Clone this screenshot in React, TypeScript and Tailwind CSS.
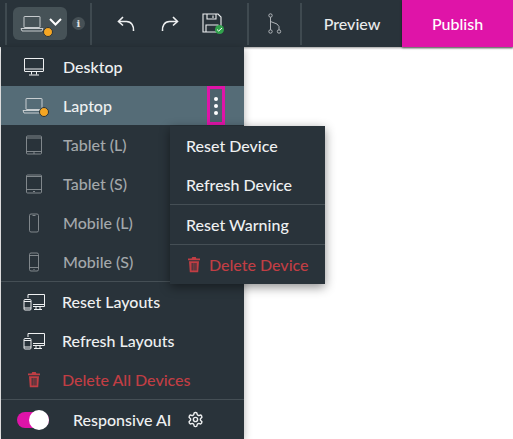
import React from "react";

const P = { fill: "none", stroke: "currentColor", strokeWidth: 1 } as const;

const Desktop = () => (
  <svg width="22" height="20" viewBox="0 0 22 20" {...P}>
    <rect x="1.5" y="1.5" width="19" height="13" rx="0.5" />
    <path d="M1.5 12h19M8.5 14.5v3M13.500 14.5v3M6 18h10" />
  </svg>
);
const Laptop = () => (
  <svg width="24" height="18" viewBox="0 0 24 18" {...P} strokeWidth="0.9">
    <rect x="4" y="1.5" width="16" height="11" rx="0.5" />
    <path d="M1 13.5h22l-1 2.5H2z" />
  </svg>
);
const Tablet = ({ h }: { h: number }) => (
  <svg width="18" height="20" viewBox="0 0 18 20" {...P} strokeWidth="0.9" className="opacity-80">
    <rect x="1.5" y="1" width="15" height="18" rx="1" />
    <path d={h === 20 ? "M1.5 3h15M1.5 16.5h15M8 18h2" : "M1.5 2.5h15M1.5 15.5h15M8 17.5h2"} />
  </svg>
);
const Phone = ({ small }: { small?: boolean }) => (
  <svg width="12" height="20" viewBox="0 0 12 20" {...P} strokeWidth="0.9" className="opacity-80">
    <rect x="1.5" y="1" width="9" height="18" rx="1.5" />
    <path d={small ? "M1.5 3.5h9M1.5 15.5h9M5.500 17.5h1" : "M4.5 2.5h3"} />
  </svg>
);
const Devices = () => (
  <svg width="23" height="18" viewBox="0 0 23 18" {...P}>
    <path d="M5 5V1.5h16.500v12H10" />
    <path d="M10 11.500h11.500M13 13.500v2.500M17 13.500v2.500M11 16.500h8" />
    <rect x="1" y="6.500" width="7" height="10.500" rx="1" />
    <path d="M1 8.500h7M1 15h7" />
  </svg>
);
const Trash = () => (
  <svg width="14" height="17" viewBox="0 0 14 16" fill="currentColor" preserveAspectRatio="none">
    <path d="M1 2.400h3.600L5.300 1h3.400l.7 1.400H13v1.500H1z" />
    <path fillRule="evenodd" d="M2 5h10l-.8 10.200H2.800zM4.600 6.600v7h1.100v-7zm1.900 0v7h1.100v-7zm1.900 0v7h1.100v-7z" />
  </svg>
);
const Badge = ({ cls }: { cls: string }) => (
  <span className={`absolute w-[10px] h-[10px] rounded-full bg-[#f5a623] border border-[#2a343b] ${cls}`} />
);

const Sep = ({ cls }: { cls: string }) => <div className={`w-[2px] h-[42px] bg-[#3f4a50] shrink-0 ${cls}`} />;

function Row({
  icon,
  label,
  cls = "text-[#eef0f1]",
  indent = "pl-[62px]",
  h = "h-[39px]",
}: {
  icon: React.ReactNode;
  label: string;
  cls?: string;
  indent?: string;
  h?: string;
}) {
  return (
    <div className={`relative ${h} flex items-center ${cls}`}>
      <div className="absolute left-[20px] w-[26px] flex justify-center">{icon}</div>
      <span className={indent}>{label}</span>
    </div>
  );
}

const Divider = ({ cls = "" }: { cls?: string }) => <div className={`h-px bg-[#454f55] ${cls}`} />;

export default function App() {
  return (
    <div
      className="relative w-[513px] h-[439px] bg-white overflow-hidden text-[16px] font-medium"
      style={{ fontFamily: "Lato, sans-serif" }}
    >
      {/* toolbar */}
      <div className="h-[47px] bg-[#29333a] flex items-center text-[#eef0f1] shadow-[0_1px_2px_rgba(0,0,0,0.4)]">
        <Sep cls="ml-[5px]" />
        <div className="relative ml-[6px] w-[54px] h-[33px] rounded-[6px] bg-[#465257] flex items-center">
          <div className="ml-[7px] flex text-[#d5d8da]">
            <Laptop />
          </div>
          <Badge cls="left-[30px] top-[20px]" />
          <svg width="13" height="8" viewBox="0 0 13 8" fill="none" stroke="#fff" strokeWidth="2" className="ml-[5px] -mt-[3px]">
            <path d="M1 1l5.500 5.500L12 1" />
          </svg>
        </div>
        <div className="ml-[5px] w-[13px] h-[13px] rounded-full bg-[#465055] text-[#dfe2e3] text-[10px] leading-[13px] font-bold text-center" style={{ fontFamily: "'DejaVu Serif', serif" }}>
          i
        </div>
        <Sep cls="ml-[5px]" />
        <svg width="20" height="20" viewBox="0 0 20 20" fill="none" stroke="#eef0f1" strokeWidth="1.600" className="ml-[24px]">
          <path d="M17.500 17c.5-5-2-9.500-7-9.500H3" />
          <path d="M7 3L2.500 7.500 7 11.500" />
        </svg>
        <svg width="20" height="20" viewBox="0 0 20 20" fill="none" stroke="#eef0f1" strokeWidth="1.600" className="ml-[24px]">
          <path d="M2.500 17c-.5-5 2-9.500 7-9.500H17" />
          <path d="M13 3l4.500 4.500-4.500 4" />
        </svg>
        <div className="relative ml-[22px] w-[24px] h-[24px]">
          <svg width="20" height="20" viewBox="0 0 20 20" fill="none" stroke="#eef0f1" strokeWidth="1.100" className="mt-[1px]">
            <path d="M1 1h15l3 3v15H1z" />
            <path d="M5 1v5h9V1M11 2.500v2.500M4 19v-7h12v7" />
          </svg>
          <span className="absolute left-[13px] top-[13px] w-[9px] h-[9px] rounded-full bg-[#31a24c] flex items-center justify-center">
            <svg width="7" height="5" viewBox="0 0 7 5" fill="none" stroke="#fff" strokeWidth="1">
              <path d="M1 2.500l1.700 1.500L6 1" />
            </svg>
          </span>
        </div>
        <Sep cls="ml-[21px]" />
        <svg width="16" height="24" viewBox="0 0 16 24" fill="none" stroke="#bcc1c4" strokeWidth="0.900" className="ml-[18px]">
          <circle cx="3.500" cy="3.500" r="1.700" />
          <circle cx="3.500" cy="19.500" r="1.700" />
          <circle cx="12" cy="19.500" r="1.700" />
          <path d="M3.500 5.200v12.600M3.500 9.500l6.500 2.500 2 2.500v3.300" />
        </svg>
        <Sep cls="ml-[17px]" />
        <div className="w-[100px] text-center text-[#e9ebec]">Preview</div>
        <div className="w-[111px] h-[47px] bg-[#df14a8] text-white text-center leading-[47px] shadow-[0_1px_2px_rgba(0,0,0,0.5)]">
          Publish
        </div>
      </div>

      {/* device menu */}
      <div className="absolute left-[1px] top-[47px] w-[243px] h-[392px] bg-[#29333a] flex flex-col shadow-[0_2px_8px_rgba(0,0,0,0.3)]">
        <Row icon={<Desktop />} label="Desktop" h="h-[39px]" />
        <div className="relative bg-[#556c77]">
          <Row
            icon={
              <span className="relative flex text-[#d5d8da]">
                <Laptop />
                <Badge cls="left-[17px] top-[10px]" />
              </span>
            }
            label="Laptop"
          />
          <div className="absolute left-[206px] top-0 w-[18px] h-[39px] border-[3px] border-[#df14a8] bg-[#4d626c] flex flex-col items-center justify-center gap-[3px]">
            <span className="w-[4px] h-[4px] rounded-full bg-white" />
            <span className="w-[4px] h-[4px] rounded-full bg-white" />
            <span className="w-[4px] h-[4px] rounded-full bg-white" />
          </div>
        </div>
        <Row icon={<Tablet h={20} />} label="Tablet (L)" cls="text-[#a3a8ab]" />
        <Row icon={<Tablet h={18} />} label="Tablet (S)" cls="text-[#a3a8ab]" />
        <Row icon={<Phone />} label="Mobile (L)" cls="text-[#a3a8ab]" />
        <Row icon={<Phone small />} label="Mobile (S)" cls="text-[#a3a8ab]" />
        <Divider />
        <Row icon={<Devices />} label="Reset Layouts" indent="pl-[61px]" />
        <Row icon={<Devices />} label="Refresh Layouts" indent="pl-[61px]" />
        <Row icon={<Trash />} label="Delete All Devices" indent="pl-[61px]" cls="text-[#c13e44]" />
        <Divider />
        <div className="flex-1 flex items-center text-[#eef0f1]">
          <div className="relative ml-[16px] w-[32px] h-[16px] rounded-full bg-[#df14a8]">
            <span className="absolute right-0 top-[-2px] w-[20px] h-[20px] rounded-full bg-white" />
          </div>
          <span className="ml-[24px]">Responsive AI</span>
          <svg width="17" height="17" viewBox="0 0 24 24" fill="none" stroke="currentColor" strokeWidth="2" strokeLinecap="round" strokeLinejoin="round" className="ml-[16px]">
            <path d="M12.220 2h-.440a2 2 0 0 0-2 2v.180a2 2 0 0 1-1 1.730l-.430.250a2 2 0 0 1-2 0l-.150-.080a2 2 0 0 0-2.730.730l-.220.380a2 2 0 0 0 .730 2.730l.150.100a2 2 0 0 1 1 1.720v.510a2 2 0 0 1-1 1.740l-.150.090a2 2 0 0 0-.730 2.730l.220.380a2 2 0 0 0 2.730.730l.150-.080a2 2 0 0 1 2 0l.430.250a2 2 0 0 1 1 1.730V20a2 2 0 0 0 2 2h.440a2 2 0 0 0 2-2v-.180a2 2 0 0 1 1-1.730l.430-.250a2 2 0 0 1 2 0l.150.080a2 2 0 0 0 2.730-.730l.220-.390a2 2 0 0 0-.730-2.730l-.150-.080a2 2 0 0 1-1-1.740v-.500a2 2 0 0 1 1-1.740l.150-.090a2 2 0 0 0 .730-2.730l-.220-.380a2 2 0 0 0-2.730-.730l-.150.080a2 2 0 0 1-2 0l-.430-.250a2 2 0 0 1-1-1.730V4a2 2 0 0 0-2-2z" />
            <circle cx="12" cy="12" r="3" />
          </svg>
        </div>
      </div>

      {/* submenu */}
      <div className="absolute left-[170px] top-[126px] w-[155px] h-[158px] bg-[#29333a] flex flex-col shadow-[0_3px_10px_rgba(0,0,0,0.45)] text-[#eef0f1]">
        <div className="h-[39px] flex items-center pl-[16px]">Reset Device</div>
        <div className="h-[39px] flex items-center pl-[16px]">Refresh Device</div>
        <Divider />
        <div className="h-[39px] flex items-center pl-[16px]">Reset Warning</div>
        <Divider />
        <div className="flex-1 flex items-center pl-[17px] text-[#c13e44]">
          <Trash />
          <span className="ml-[8px]">Delete Device</span>
        </div>
      </div>
    </div>
  );
}
